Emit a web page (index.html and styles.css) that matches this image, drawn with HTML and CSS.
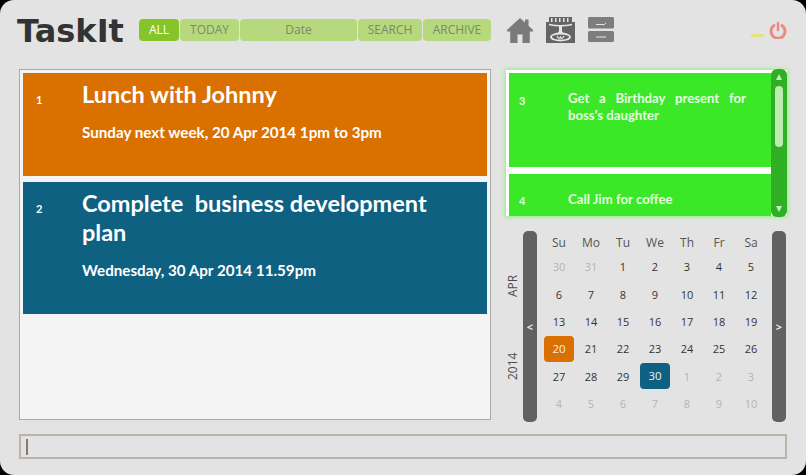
FILE: index.html
```html
<!DOCTYPE html>
<html lang="en">
<head>
    <meta charset="UTF-8">
    <meta name="viewport" content="width=device-width, initial-scale=1.0">
    <title>TaskIt</title>
    <link rel="stylesheet" href="styles.css">
</head>
<body>
    <div class="app">
        <header class="topbar">
            <div class="logo">TaskIt</div>
            <nav class="tabs">
                <div class="tab tab-all active">ALL</div>
                <div class="tab tab-today">TODAY</div>
                <div class="tab tab-date">Date</div>
                <div class="tab tab-search">SEARCH</div>
                <div class="tab tab-archive">ARCHIVE</div>
            </nav>
            <div class="tools">
                <svg class="tool-home" viewBox="0 0 26 26">
                    <path fill="#7a7a7a" d="M13 1 L18 5.5 V2.5 H21.5 V8.7 L26 13 V14.5 H22.8 V26 H15.5 V17.5 H10.5 V26 H3.2 V14.5 H0 V13 Z"/>
                </svg>
                <svg class="tool-plan" viewBox="0 0 29 26">
                    <path fill="#646464" d="M0 5 H29 V26 H0 Z M3 0 H26 V6 H3 Z"/>
                    <path fill="#e6e6e6" d="M5 1 H6.5 V5 H5 Z M9 1 H10.500 V5 H9 Z M13 1 H14.500 V5 H13 Z M17 1 H18.500 V5 H17 Z M21 1 H22.500 V5 H21 Z"/>
                    <path fill="none" stroke="#e6e6e6" stroke-width="1.500" d="M3 7.500 Q14.500 10 26 7.500"/>
                    <path fill="#e6e6e6" d="M13 9 H16 V14 L17.500 17 H11.500 L13 14 Z"/>
                    <ellipse cx="14.500" cy="20" rx="9.500" ry="3.500" fill="none" stroke="#e6e6e6" stroke-width="1.800"/>
                    <path fill="none" stroke="#e6e6e6" stroke-width="1.200" d="M11 19 Q13 23 14.500 20 Q16 23 18 19"/>
                </svg>
                <svg class="tool-drawer" viewBox="0 0 26 25">
                    <rect x="0" y="0" width="26" height="11.500" rx="1.500" fill="#7d7d7d"/>
                    <rect x="0" y="14" width="26" height="11" rx="1.500" fill="#7d7d7d"/>
                    <path fill="none" stroke="#e6e6e6" stroke-width="1" d="M8 7.500 H16.500 L18 6 M8 20 H18"/>
                </svg>
            </div>
            <div class="window-btns">
                <span class="minimize"></span>
                <svg class="power" viewBox="0 0 18 18">
                    <path fill="none" stroke="#e88b84" stroke-width="3" stroke-linecap="round" d="M5 4.500 A7 7 0 1 0 13 4.500"/>
                    <path fill="none" stroke="#e88b84" stroke-width="2.500" stroke-linecap="round" d="M9 2 V9"/>
                </svg>
            </div>
        </header>

        <div class="content">
            <section class="main-list">
                <article class="event event-orange">
                    <div class="num">1</div>
                    <div class="event-body">
                        <h2>Lunch with Johnny</h2>
                        <p>Sunday next week, 20 Apr 2014 1pm to 3pm</p>
                    </div>
                </article>
                <article class="event event-blue">
                    <div class="num">2</div>
                    <div class="event-body">
                        <h2>Complete&nbsp; business development plan</h2>
                        <p>Wednesday, 30 Apr 2014 11.59pm</p>
                    </div>
                </article>
            </section>

            <aside class="side">
                <section class="todo">
                    <div class="todo-items">
                        <div class="todo-item todo-first">
                            <div class="num">3</div>
                            <div class="todo-text">Get a Birthday present for boss's daughter</div>
                        </div>
                        <div class="todo-item todo-second">
                            <div class="num">4</div>
                            <div class="todo-text">Call Jim for coffee</div>
                        </div>
                    </div>
                    <div class="scrollbar">
                        <span class="arrow-up"></span>
                        <span class="thumb"></span>
                        <span class="arrow-down"></span>
                    </div>
                </section>

                <section class="calendar">
                    <div class="month-label">
                        <span>2014</span>
                        <span>APR</span>
                    </div>
                    <div class="cal-bar">&lt;</div>
                    <div class="cal-grid" id="cal-grid">
                        <div class="dow">Su</div><div class="dow">Mo</div><div class="dow">Tu</div><div class="dow">We</div><div class="dow">Th</div><div class="dow">Fr</div><div class="dow">Sa</div>
                        <div class="day off">30</div><div class="day off">31</div><div class="day">1</div><div class="day">2</div><div class="day">3</div><div class="day">4</div><div class="day">5</div>
                        <div class="day">6</div><div class="day">7</div><div class="day">8</div><div class="day">9</div><div class="day">10</div><div class="day">11</div><div class="day">12</div>
                        <div class="day">13</div><div class="day">14</div><div class="day">15</div><div class="day">16</div><div class="day">17</div><div class="day">18</div><div class="day">19</div>
                        <div class="day"><span class="mark mark-orange">20</span></div><div class="day">21</div><div class="day">22</div><div class="day">23</div><div class="day">24</div><div class="day">25</div><div class="day">26</div>
                        <div class="day">27</div><div class="day">28</div><div class="day">29</div><div class="day"><span class="mark mark-blue">30</span></div><div class="day off">1</div><div class="day off">2</div><div class="day off">3</div>
                        <div class="day off">4</div><div class="day off">5</div><div class="day off">6</div><div class="day off">7</div><div class="day off">8</div><div class="day off">9</div><div class="day off">10</div>
                    </div>
                    <div class="cal-bar">&gt;</div>
                </section>
            </aside>
        </div>

        <div class="command">
            <span class="caret"></span>
        </div>
    </div>
</body>
</html>
```

FILE: styles.css
```css
body, h2, p {
    margin: 0;
    padding: 0;
}

body {
    width: 806px;
    height: 475px;
    overflow: hidden;
    background-color: #000;
    font-family: 'Lato', 'Noto Sans', sans-serif;
}

.app {
    box-sizing: border-box;
    width: 806px;
    height: 475px;
    padding: 17px 19px 0 19px;
    background-color: #e3e3e3;
    border-radius: 14px;
}

/* top bar */
.topbar {
    display: flex;
    height: 52px;
}

.logo {
    width: 120px;
    height: 28px;
    margin-left: -2px;
    margin-right: 2px;
    font-family: 'DejaVu Sans', sans-serif;
    font-weight: 700;
    font-size: 32px;
    line-height: 28px;
    color: #333;
}

.tabs {
    display: flex;
    gap: 1px;
    height: 22px;
    margin-top: 2px;
}

.tab {
    background-color: #b5d97c;
    border-radius: 4px;
    color: #7c8a68;
    font-family: 'Open Sans', sans-serif;
    font-size: 12px;
    line-height: 22px;
    text-align: center;
}

.tab.active {
    background-color: #85c52a;
    color: #fff;
}

.tab-all { width: 40px; }
.tab-today { width: 59px; }
.tab-date { width: 117px; }
.tab-search { width: 64px; }
.tab-archive { width: 68px; }

.tools {
    display: flex;
    gap: 13px;
    margin-left: 16px;
}

.tool-home {
    width: 26px;
    height: 26px;
}

.tool-plan {
    width: 29px;
    height: 26px;
}

.tool-drawer {
    width: 26px;
    height: 25px;
}

.window-btns {
    display: flex;
    align-items: flex-end;
    gap: 5px;
    height: 22px;
    margin-left: auto;
}

.minimize {
    width: 13px;
    height: 3px;
    margin-bottom: 2px;
    background-color: #e7e27c;
}

.power {
    width: 18px;
    height: 18px;
}

/* main columns */
.content {
    display: flex;
    gap: 12px;
    height: 351px;
}

.main-list {
    box-sizing: border-box;
    width: 472px;
    padding: 3px;
    background-color: #f4f4f4;
    border: 1px solid #a9a9a9;
}

.event {
    display: flex;
    color: #fff;
}

.event + .event {
    margin-top: 6px;
}

.event-orange {
    height: 103px;
    background-color: #da7000;
}

.event-blue {
    height: 132px;
    background-color: #0f6182;
}

.num {
    width: 59px;
    padding-left: 13px;
    box-sizing: border-box;
    font-size: 11px;
    font-weight: 700;
}

.event .num {
    padding-top: 20px;
}

.event-body {
    width: 372px;
    padding-top: 7px;
}

.event-body h2 {
    font-size: 23.500px;
    font-weight: 700;
    line-height: 29px;
}

.event-body p {
    margin-top: 14px;
    font-size: 15.200px;
    font-weight: 700;
    line-height: 18px;
}

.side {
    display: flex;
    flex-direction: column;
    gap: 15px;
    width: 284px;
}

/* green todo list */
.todo {
    display: flex;
    height: 146px;
    margin: 1px 0 0 3px;
    background-color: #fff;
    box-shadow: 0 0 4px 1px #8ff07f;
}

.todo-items {
    flex: 1;
    padding: 3px 0 0 3px;
    overflow: hidden;
    color: #e6fbe0;
}

.todo-item {
    display: flex;
    background-color: #3ae828;
}

.todo-first {
    height: 94px;
    margin-bottom: 7px;
}

.todo-second {
    height: 42px;
}

.todo-item .num {
    padding-left: 10px;
}

.todo-first .num {
    padding-top: 21px;
}

.todo-second .num {
    padding-top: 20px;
}

.todo-text {
    width: 178px;
    font-size: 13.200px;
    font-weight: 700;
    line-height: 17px;
    text-align: justify;
}

.todo-first .todo-text {
    padding-top: 17px;
}

.todo-second .todo-text {
    padding-top: 17px;
}

.scrollbar {
    display: flex;
    flex-direction: column;
    align-items: center;
    width: 16px;
    margin: -1px 0;
    background-color: #2fb024;
    border-radius: 6px;
}

.arrow-up {
    width: 0;
    height: 0;
    margin-top: 5px;
    border-left: 3px solid transparent;
    border-right: 3px solid transparent;
    border-bottom: 6px solid #c6f0bd;
}

.thumb {
    width: 8px;
    height: 61px;
    margin-top: 6px;
    background-color: #bdebb0;
    border-radius: 4px;
}

.arrow-down {
    width: 0;
    height: 0;
    margin-top: auto;
    margin-bottom: 5px;
    border-left: 3px solid transparent;
    border-right: 3px solid transparent;
    border-top: 6px solid #c6f0bd;
}

/* calendar */
.calendar {
    display: flex;
    height: 191px;
    font-family: 'Open Sans', sans-serif;
}

.month-label {
    display: flex;
    justify-content: space-between;
    width: 20px;
    height: 105px;
    margin-top: 44px;
    writing-mode: vertical-rl;
    transform: rotate(180deg);
    font-size: 12px;
    line-height: 20px;
    color: #4c4c4c;
}

.cal-bar {
    width: 14px;
    background-color: #616161;
    border-radius: 5px;
    color: #e8e8e8;
    font-size: 11px;
    font-weight: 700;
    line-height: 191px;
    text-align: center;
}

.cal-grid {
    display: grid;
    grid-template-columns: repeat(7, 32px);
    grid-template-rows: 22px repeat(6, 27.4px);
    width: 224px;
    margin: 0 5px 0 6px;
    font-size: 11px;
    color: #333;
    text-align: center;
}

.dow {
    font-size: 12px;
    line-height: 23px;
    color: #555;
}

.day {
    display: flex;
    align-items: center;
    justify-content: center;
}

.day.off {
    color: #b4b4b4;
}

.mark {
    width: 30px;
    height: 26px;
    border-radius: 4px;
    color: #f2f2f2;
    font-size: 11.500px;
    line-height: 26px;
}

.mark-orange {
    background-color: #da7000;
}

.mark-blue {
    background-color: #0f6182;
}

/* command box */
.command {
    box-sizing: border-box;
    display: flex;
    align-items: center;
    height: 25px;
    margin-top: 14px;
    padding-left: 5px;
    background-color: #e3e3e3;
    border: 2px solid #bcb3aa;
}

.caret {
    width: 2px;
    height: 16px;
    background-color: #7d7d7d;
}
```
